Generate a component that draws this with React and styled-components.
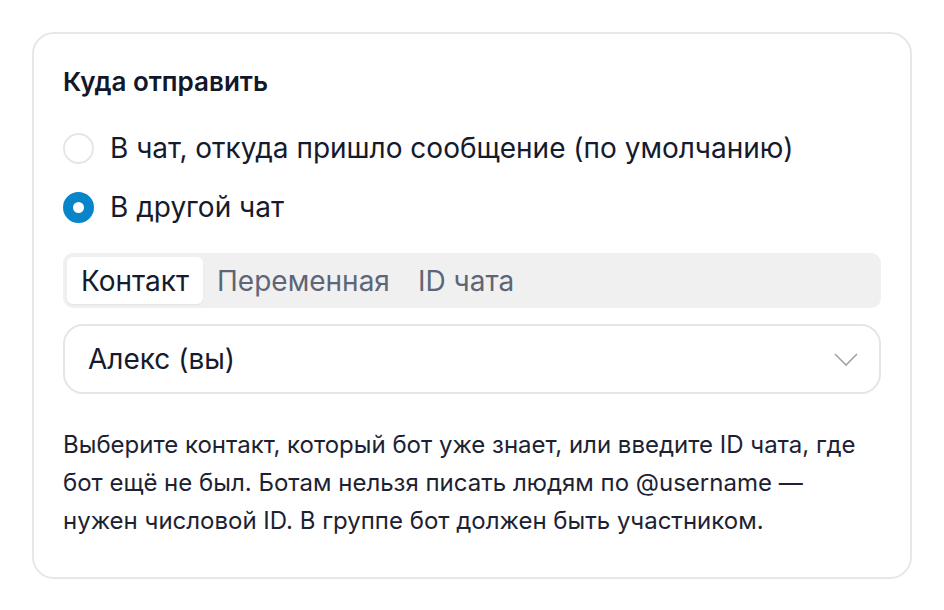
import React, { useState } from "react";
import styled, { createGlobalStyle } from "styled-components";

const GlobalStyle = createGlobalStyle`
  body {
    margin: 0;
    background: #ffffff;
    font-family: Inter, "Noto Sans", sans-serif;
    color: #151a2d;
  }
`;

const tabs = ["Контакт", "Переменная", "ID чата"];

const App = () => {
  const [target, setTarget] = useState("other");
  const [tab, setTab] = useState(0);
  return (
    <Page>
      <GlobalStyle />
      <Card>
        <Title>Куда отправить</Title>
        <RadioList>
          <RadioRow onClick={() => setTarget("same")}>
            <RadioCircle checked={target === "same"} />
            В чат, откуда пришло сообщение (по умолчанию)
          </RadioRow>
          <RadioRow onClick={() => setTarget("other")}>
            <RadioCircle checked={target === "other"} />
            В другой чат
          </RadioRow>
        </RadioList>
        <TabBar>
          {tabs.map((t, i) => (
            <Tab key={t} active={i === tab} onClick={() => setTab(i)}>
              {t}
            </Tab>
          ))}
        </TabBar>
        <Select>
          <span>Алекс (вы)</span>
          <svg width="26" height="16" viewBox="0 0 26 16" fill="none">
            <path d="M2 3l11 11L24 3" stroke="#a3a3ab" strokeWidth="1.6" />
          </svg>
        </Select>
        <Hint>
          Выберите контакт, который бот уже знает, или введите ID чата, где
          бот ещё не был. Ботам нельзя писать людям по @username — нужен
          числовой ID. В группе бот должен быть участником.
        </Hint>
      </Card>
    </Page>
  );
};

export default App;

const Page = styled.div`
  padding: 32px;
`;

const Card = styled.section`
  width: 880px;
  box-sizing: border-box;
  border: 2px solid #e7e7eb;
  border-radius: 22px;
  padding: 31px 29px 37px;
`;

const Title = styled.h2`
  margin: 0;
  font-size: 26px;
  line-height: 34px;
  font-weight: 600;
  color: #121729;
`;

const RadioList = styled.div`
  display: flex;
  flex-direction: column;
  gap: 13px;
  margin-top: 26px;
`;

const RadioRow = styled.label`
  display: flex;
  align-items: center;
  gap: 16px;
  height: 46px;
  font-size: 28px;
  color: #151a2d;
  cursor: pointer;
`;

const RadioCircle = styled.span`
  width: 31px;
  height: 31px;
  box-sizing: border-box;
  border-radius: 50%;
  flex-shrink: 0;
  border: ${({ checked }) => (checked ? "10px solid #0884c8" : "2px solid #e6e6ea")};
  background: #ffffff;
`;

const TabBar = styled.div`
  display: flex;
  margin-top: 23px;
  height: 55px;
  box-sizing: border-box;
  padding: 4px;
  background: #f0f0f1;
  border-radius: 10px;
`;

const Tab = styled.button`
  border: none;
  font-family: inherit;
  font-size: 28px;
  padding: 0 14px;
  border-radius: 6px;
  cursor: pointer;
  background: ${({ active }) => (active ? "#ffffff" : "transparent")};
  color: ${({ active }) => (active ? "#151a2d" : "#5d6576")};
  box-shadow: ${({ active }) => (active ? "0 1px 2px rgba(0,0,0,0.06)" : "none")};
`;

const Select = styled.div`
  margin-top: 16px;
  height: 70px;
  box-sizing: border-box;
  border: 2px solid #e6e6ea;
  border-radius: 20px;
  display: flex;
  align-items: center;
  justify-content: space-between;
  padding: 0 20px 0 23px;
  font-size: 28px;
  color: #151a2d;
`;

const Hint = styled.p`
  margin: 32px 0 0;
  font-size: 24px;
  line-height: 38px;
  color: #1d2233;
`;
